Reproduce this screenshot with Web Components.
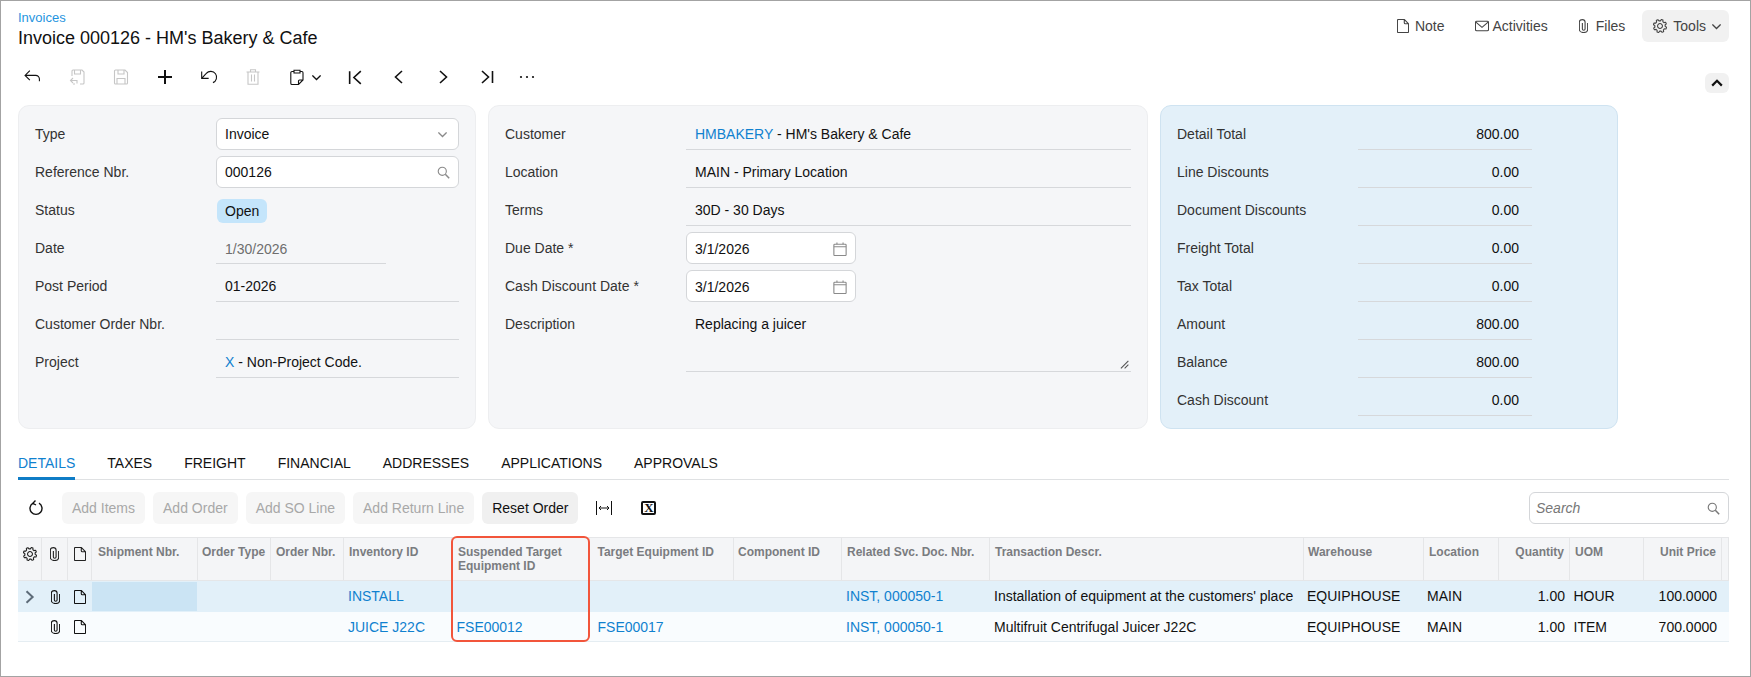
<!DOCTYPE html>
<html>
<head>
<meta charset="utf-8">
<title>Invoice 000126</title>
<style>
  html, body { margin: 0; padding: 0; background: #fff; }
  body { font: 14px "Liberation Sans", Arial, sans-serif; color: #111; }
</style>
</head>
<body>
<inv-page>
  <inv-header slot="header" crumb="Invoices" heading="Invoice 000126 - HM's Bakery &amp; Cafe">
    <inv-action icon="note" size="12" style="--gap:6px">Note</inv-action>
    <inv-action icon="mail" size="14" style="--gap:4px;margin-left:30px">Activities</inv-action>
    <inv-action icon="clip" size="9" style="--gap:8px;margin-left:31px">Files</inv-action>
    <inv-action icon="gear" size="14" menu style="--gap:6px;margin-left:17px">Tools</inv-action>
  </inv-header>

  <inv-toolbar slot="toolbar"></inv-toolbar>

  <inv-panels slot="panels">
    <inv-panel style="width:458px">
      <inv-field label="Type" kind="select">Invoice</inv-field>
      <inv-field label="Reference Nbr." kind="lookup">000126</inv-field>
      <inv-field label="Status" kind="pill">Open</inv-field>
      <inv-field label="Date" kind="muted">1/30/2026</inv-field>
      <inv-field label="Post Period">01-2026</inv-field>
      <inv-field label="Customer Order Nbr."></inv-field>
      <inv-field label="Project"><inv-link>X</inv-link> - Non-Project Code.</inv-field>
    </inv-panel>
    <inv-panel style="width:660px">
      <inv-field label="Customer"><inv-link>HMBAKERY</inv-link> - HM's Bakery &amp; Cafe</inv-field>
      <inv-field label="Location">MAIN - Primary Location</inv-field>
      <inv-field label="Terms">30D - 30 Days</inv-field>
      <inv-field label="Due Date *" kind="date">3/1/2026</inv-field>
      <inv-field label="Cash Discount Date *" kind="date">3/1/2026</inv-field>
      <inv-field label="Description" kind="area">Replacing a juicer</inv-field>
    </inv-panel>
    <inv-panel tone="blue" style="width:458px">
      <inv-field label="Detail Total" kind="amount">800.00</inv-field>
      <inv-field label="Line Discounts" kind="amount">0.00</inv-field>
      <inv-field label="Document Discounts" kind="amount">0.00</inv-field>
      <inv-field label="Freight Total" kind="amount">0.00</inv-field>
      <inv-field label="Tax Total" kind="amount">0.00</inv-field>
      <inv-field label="Amount" kind="amount">800.00</inv-field>
      <inv-field label="Balance" kind="amount">800.00</inv-field>
      <inv-field label="Cash Discount" kind="amount">0.00</inv-field>
    </inv-panel>
  </inv-panels>

  <inv-tabs slot="tabs" active="DETAILS" items="DETAILS,TAXES,FREIGHT,FINANCIAL,ADDRESSES,APPLICATIONS,APPROVALS"></inv-tabs>

  <inv-grid-bar slot="gridbar"></inv-grid-bar>

  <inv-grid slot="grid"></inv-grid>
</inv-page>

<script>
// Gear outline is easier to generate than to write by hand
const GEAR = (() => {
  let d = '';
  for (let i = 0; i < 48; i++) {
    const a = (i / 48) * Math.PI * 2;
    const r = (i % 6 < 3) ? 7.6 : 5.9;
    d += (i ? 'L' : 'M') + (8 + r * Math.cos(a + 0.2)).toFixed(2) + ' ' + (8 + r * Math.sin(a + 0.2)).toFixed(2);
  }
  return d + 'Z M10.8 8a2.8 2.8 0 1 1-5.6 0a2.8 2.8 0 1 1 5.600 0Z';
})();

const ICONS = {
  back: '<path d="M1 6H11a3.500 3.500 0 0 1 3.500 3.500V11.500M5.500 1.500L1 6l4.500 4.500"/>',
  saveclose: '<path d="M3 7V2a1 1 0 0 1 1-1h9l2 2v11a1 1 0 0 1-1 1h-3M5.500 1v4h6V1M1.500 11.500h6.500v3M4 9L1.500 11.500 4 14M4 15h2"/>',
  save: '<path d="M2.500 1h9.500l2.500 2.500V14a1 1 0 0 1-1 1h-11a1 1 0 0 1-1-1V2a1 1 0 0 1 1-1zM5 1v4h6V1M4 15V9.500h8V15"/>',
  plus: '<path stroke-width="2" d="M8 1v14M1 8h14"/>',
  undo: '<path d="M1.500 3v6.200h6.200M1.500 9.200L5.600 4.800A5.200 5.200 0 1 1 11.500 13"/>',
  trash: '<path d="M1.500 3h13M5.500 3V.8h5V3M3 3V15.200h10V3M6.500 5.500v7M9.500 5.500v7"/>',
  paste: '<path d="M5 2.500H3a1.200 1.200 0 0 0-1.200 1.200v10.600A1.200 1.200 0 0 0 3 15.500h6.500l4.500-4.500V3.700a1.200 1.200 0 0 0-1.200-1.200H11M5 4V1.200h6V4zM9.500 15.500V12a1 1 0 0 1 1-1H14"/>',
  first: '<path stroke-width="1.600" d="M2.500 2v12M13 2L6.500 8l6.500 6"/>',
  prev: '<path stroke-width="1.600" d="M11 2L4.500 8l6.500 6"/>',
  next: '<path stroke-width="1.600" d="M5 2l6.500 6L5 14"/>',
  last: '<path stroke-width="1.600" d="M13.500 2v12M3 2l6.500 6L3 14"/>',
  more: '<circle cx="2" cy="8" r="1.100" fill="currentColor" stroke="none"/><circle cx="8" cy="8" r="1.100" fill="currentColor" stroke="none"/><circle cx="14" cy="8" r="1.100" fill="currentColor" stroke="none"/>',
  down: '<path stroke-width="1.300" d="M3 5.500l5 5 5-5"/>',
  up: '<path stroke-width="2.200" d="M2.500 11L8 5.500l5.500 5.500"/>',
  rowopen: '<path stroke-width="2" d="M4 1.500L11 8l-7 6.500"/>',
  search: '<circle cx="6.500" cy="6.500" r="5"/><path stroke-width="1.500" d="M10.200 10.200L15 15"/>',
  note: '<path d="M2.700 .5H9.500L14.500 5.500V14.300a1.200 1.200 0 0 1-1.200 1.200H2.700a1.200 1.200 0 0 1-1.200-1.200V1.700a1.200 1.200 0 0 1 1.200-1.200zM9.500 .5V4.300a1.200 1.200 0 0 0 1.200 1.200h3.800"/>',
  mail: '<rect x=".5" y="2.500" width="15" height="11" rx="1.500"/><path d="M1 3.500L8 9.500l7-6"/>',
  clip: '<path d="M13.500 4.500v7.500a5.500 3.500 0 0 1-11 0V3.500a3.800 2.800 0 0 1 7.600 0V11.500a1.800 1.300 0 0 1-3.600 0V4.500"/>',
  gear: `<path stroke-linejoin="round" d="${GEAR}"/>`,
  calendar: '<rect x="1" y="2.500" width="14" height="13" rx="1"/><path d="M1 5.500h14M4.500 .5v2M11.500 .5v2"/>',
  refresh: '<path stroke-width="1.400" d="M5 3.200a6 6 0 1 0 6 0M7.500 .5L4.800 3.300 8 5"/>',
  fit: '<path stroke-width="1" d="M.5 1v14M15.500 1v14M3 8h10M5 6L3 8l2 2M11 6l2 2-2 2"/>',
  resize: '<path d="M3 15L15 3M9 15l6-6"/>'
};

// Tighter view boxes, so that the size attribute is the drawn size
const VIEWS = {
  down: '2.5 2.5 11 11',
  note: '1 0 14 16',
  clip: '2 0 12 16'
};

/**
 * Inline icon. Takes name, size and an optional height.
 */
class InvIcon extends HTMLElement {
  connectedCallback() {
    const size = this.getAttribute('size') || 16;
    const height = this.getAttribute('height') || size;
    const name = this.getAttribute('name');
    const fit = height !== size ? ' preserveAspectRatio="none"' : '';
    this.attachShadow({ mode: 'open' }).innerHTML = `
      <style>
        :host { display: inline-flex; flex: none; }
        svg { display: block; fill: none; stroke: currentColor; stroke-width: 1.1px; }
        svg * { vector-effect: non-scaling-stroke; }
      </style>
      <svg width="${size}" height="${height}" viewBox="${VIEWS[name] || '0 0 16 16'}"${fit}>${ICONS[name]}</svg>`;
  }
}
customElements.define('inv-icon', InvIcon);

class InvLink extends HTMLElement {
  constructor() {
    super();
    this.attachShadow({ mode: 'open' }).innerHTML = `
      <style>:host { color: #1081cf; }</style><slot></slot>`;
  }
}
customElements.define('inv-link', InvLink);

/**
 * Page frame. Stacks everything in order.
 */
class InvPage extends HTMLElement {
  constructor() {
    super();
    this.attachShadow({ mode: 'open' }).innerHTML = `
      <style>
        :host {
          display: flex;
          flex-direction: column;
          box-sizing: border-box;
          width: 1751px;
          height: 677px;
          padding: 9px 21px 0 17px;
          border: 1px solid #a3a3a3;
          overflow: hidden;
          font: 14px "Liberation Sans", Arial, sans-serif;
          color: #111;
          background: #fff;
        }
      </style>
      <slot name="header"></slot>
      <slot name="toolbar"></slot>
      <slot name="panels"></slot>
      <slot name="tabs"></slot>
      <slot name="gridbar"></slot>
      <slot name="grid"></slot>`;
  }
}
customElements.define('inv-page', InvPage);

class InvHeader extends HTMLElement {
  connectedCallback() {
    this.attachShadow({ mode: 'open' }).innerHTML = `
      <style>
        :host { display: flex; justify-content: space-between; height: 40px; }
        .crumb { font-size: 13px; line-height: 15px; color: #1f95e0; }
        h1 { margin: 1px 0 0; font-size: 18px; font-weight: 400; line-height: 24px; color: #111; }
        .actions { display: flex; align-items: flex-start; }
      </style>
      <div>
        <div class="crumb">${this.getAttribute('crumb')}</div>
        <h1></h1>
      </div>
      <div class="actions"><slot></slot></div>`;
    this.shadowRoot.querySelector('h1').textContent = this.getAttribute('heading');
  }
}
customElements.define('inv-header', InvHeader);

class InvAction extends HTMLElement {
  connectedCallback() {
    const menu = this.hasAttribute('menu');
    const size = this.getAttribute('size');
    this.attachShadow({ mode: 'open' }).innerHTML = `
      <style>
        :host {
          display: inline-flex;
          align-items: center;
          gap: var(--gap, 6px);
          height: 32px;
          color: #444;
          ${menu ? 'background: #f1f1f1; border-radius: 6px; padding: 0 8px 0 11px;' : ''}
        }
      </style>
      <inv-icon name="${this.getAttribute('icon')}" size="${size}" height="14"></inv-icon>
      <slot></slot>
      ${menu ? '<inv-icon name="down" size="9"></inv-icon>' : ''}`;
  }
}
customElements.define('inv-action', InvAction);

/**
 * Main form toolbar.
 */
class InvToolbar extends HTMLElement {
  constructor() {
    super();
    const tool = (name, size, off) => `
      <button class="${off ? 'off' : ''}"><inv-icon name="${name}" size="${size}"></inv-icon></button>`;
    this.attachShadow({ mode: 'open' }).innerHTML = `
      <style>
        :host { display: flex; align-items: flex-end; height: 32px; margin-top: 11px; }
        .tools { display: flex; margin-left: -7.5px; height: 32px; }
        button {
          display: flex; align-items: center; justify-content: center;
          width: 44px; height: 32px; padding: 0; border: 0; background: none; color: #111;
        }
        button.off { color: #c6c6c6; }
        button.paste { width: 58.5px; justify-content: flex-start; padding-left: 14.5px; gap: 7px; }
        button.more { width: 36px; }
        .collapse {
          margin-left: auto; width: 24px; height: 20px; border-radius: 6px;
          background: #f1f1f1;
        }
      </style>
      <div class="tools">
        ${tool('back', 17)}${tool('saveclose', 16, true)}${tool('save', 16, true)}${tool('plus', 16)}
        ${tool('undo', 18)}${tool('trash', 16, true)}
        <button class="paste"><inv-icon name="paste" size="16"></inv-icon><inv-icon name="down" size="9"></inv-icon></button>
        ${tool('first', 17)}${tool('prev', 16)}${tool('next', 16)}${tool('last', 16)}
        <button class="more"><inv-icon name="more" size="16"></inv-icon></button>
      </div>
      <button class="collapse"><inv-icon name="up" size="14"></inv-icon></button>`;
  }
}
customElements.define('inv-toolbar', InvToolbar);

class InvPanels extends HTMLElement {
  constructor() {
    super();
    this.attachShadow({ mode: 'open' }).innerHTML = `
      <style>:host { display: flex; gap: 12px; height: 324px; margin-top: 12px; }</style>
      <slot></slot>`;
  }
}
customElements.define('inv-panels', InvPanels);

class InvPanel extends HTMLElement {
  constructor() {
    super();
    this.attachShadow({ mode: 'open' }).innerHTML = `
      <style>
        :host {
          display: flex; flex-direction: column; gap: 6px;
          box-sizing: border-box;
          padding: 12px 16px;
          border: 1px solid #edeef0;
          border-radius: 11px;
          background: #f5f6f8;
        }
        :host([tone="blue"]) {
          padding-right: 85px;
          border-color: #cfe3f1;
          background: #e3f0f9;
        }
      </style>
      <slot></slot>`;
  }
}
customElements.define('inv-panel', InvPanel);

/**
 * Label plus value. The kind attribute picks how the value is boxed.
 */
class InvField extends HTMLElement {
  connectedCallback() {
    const kind = this.getAttribute('kind') || 'plain';
    const trailing = {
      select: '<inv-icon class="gray" name="down" size="9"></inv-icon>',
      lookup: '<inv-icon class="gray" name="search" size="13"></inv-icon>',
      date: '<inv-icon class="gray" name="calendar" size="14"></inv-icon>',
      area: '<inv-icon class="grip" name="resize" size="10"></inv-icon>'
    }[kind] || '';
    this.attachShadow({ mode: 'open' }).innerHTML = `
      <style>
        :host {
          display: grid;
          grid-template-columns: 181px 1fr;
          align-items: start;
          min-height: 32px;
          color: #111;
        }
        :host([kind="area"]) { min-height: 64px; }
        .label { line-height: 32px; color: #333; white-space: nowrap; }
        .value {
          display: flex; align-items: center; justify-content: space-between;
          box-sizing: border-box;
          height: 32px;
          padding: 0 9px;
          line-height: 32px;
          border-bottom: 1px solid #d6d8db;
          white-space: nowrap;
        }
        .value slot { display: block; }
        .select, .lookup, .date {
          background: #fff;
          border: 1px solid #d4d6d9;
          border-radius: 6px;
          padding: 2px 8px 0;
        }
        .select, .lookup { padding-top: 0; }
        .date { width: 170px; padding-right: 8px; }
        .muted { width: 170px; color: #6e6e6e; padding-top: 2px; }
        .pill { border: 0; padding: 0; margin-top: 5px; height: auto; }
        .pill span {
          display: block; margin-left: 1px; padding: 0 8px; height: 24px; line-height: 25px;
          background: #c4e5fb; border-radius: 6px;
        }
        .area { position: relative; height: 64px; align-items: flex-start; }
        .grip { position: absolute; right: 2px; bottom: 2px; color: #555; }
        .amount { width: 174px; justify-content: flex-end; padding-right: 13px; }
        .gray { color: #8a8a8a; }
        .select .gray { margin-right: 3px; }
      </style>
      <div class="label">${this.getAttribute('label')}</div>
      <div class="value ${kind}">${kind === 'pill' ? '<span><slot></slot></span>' : '<slot></slot>'}${trailing}</div>`;
  }
}
customElements.define('inv-field', InvField);

class InvTabs extends HTMLElement {
  connectedCallback() {
    const active = this.getAttribute('active');
    const tabs = this.getAttribute('items').split(',').map(t =>
      `<div class="tab ${t === active ? 'on' : ''}">${t}</div>`).join('');
    this.attachShadow({ mode: 'open' }).innerHTML = `
      <style>
        :host {
          display: flex; gap: 32px;
          box-sizing: border-box;
          height: 31px;
          margin-top: 20px;
          border-bottom: 1px solid #dfe1e3;
        }
        .tab { box-sizing: border-box; height: 31px; line-height: 28px; color: #111; }
        .on { color: #1081cf; border-bottom: 3px solid #0f7cc6; }
      </style>
      ${tabs}`;
  }
}
customElements.define('inv-tabs', InvTabs);

/**
 * Toolbar over the grid: refresh, actions, fit, export and search.
 */
class InvGridBar extends HTMLElement {
  constructor() {
    super();
    const btn = (label, on) => `<div class="btn ${on ? 'on' : ''}">${label}</div>`;
    this.attachShadow({ mode: 'open' }).innerHTML = `
      <style>
        :host { display: flex; align-items: center; gap: 8px; height: 32px; margin-top: 12px; }
        .refresh { width: 36px; display: flex; justify-content: center; color: #111; }
        .btn {
          box-sizing: border-box; height: 32px; padding: 0 10px; line-height: 32px;
          border-radius: 6px; background: #f6f6f6; color: #a8a8a8; white-space: nowrap;
        }
        .btn.on { background: #f0f0f0; color: #111; }
        .fit { margin-left: 10px; color: #111; }
        .xls {
          box-sizing: border-box;
          margin-left: 21px; width: 15px; height: 14px;
          border: 2px solid #111; border-radius: 2px;
          font: bold 13px/10px "Liberation Serif", serif; text-align: center; color: #111;
        }
        .search {
          display: flex; align-items: center; justify-content: space-between;
          box-sizing: border-box;
          margin-left: auto; width: 200px; height: 32px; padding: 0 8px 0 6px;
          border: 1px solid #d4d6d9; border-radius: 6px; background: #fff;
          font-style: italic; color: #777;
        }
      </style>
      <div class="refresh"><inv-icon name="refresh" size="16"></inv-icon></div>
      ${btn('Add Items')}${btn('Add Order')}${btn('Add SO Line')}${btn('Add Return Line')}${btn('Reset Order', true)}
      <inv-icon class="fit" name="fit" size="16"></inv-icon>
      <div class="xls">X</div>
      <div class="search">Search<inv-icon name="search" size="13"></inv-icon></div>`;
  }
}
customElements.define('inv-grid-bar', InvGridBar);

// hp and cp are the left paddings of the header and of the cells
const COLUMNS = [
  { w: 24 }, { w: 26 }, { w: 24 },
  { w: 106, hp: 6, cp: 5, title: 'Shipment Nbr.', key: 'ship' },
  { w: 73, hp: 4, cp: 5, title: 'Order Type', key: 'type' },
  { w: 73, hp: 5, cp: 5, title: 'Order Nbr.', key: 'order' },
  { w: 108, hp: 5, cp: 4, title: 'Inventory ID', key: 'inv', link: true },
  { w: 138, hp: 6, cp: 4.5, title: 'Suspended Target Equipment ID', key: 'susp', link: true },
  { w: 144, hp: 7.5, cp: 7.5, title: 'Target Equipment ID', key: 'target', link: true },
  { w: 108, hp: 4, cp: 4, title: 'Component ID', key: 'comp' },
  { w: 148, hp: 5, cp: 4, title: 'Related Svc. Doc. Nbr.', key: 'svc', link: true },
  { w: 314, hp: 5, cp: 4, title: 'Transaction Descr.', key: 'descr' },
  { w: 120, hp: 4, cp: 3, title: 'Warehouse', key: 'wh' },
  { w: 75, hp: 5, cp: 3, title: 'Location', key: 'loc' },
  { w: 71, title: 'Quantity', key: 'qty', right: true },
  { w: 74, hp: 5, cp: 3.5, title: 'UOM', key: 'uom' },
  { w: 78, title: 'Unit Price', key: 'price', right: true },
  { w: 7 }
];

const ROWS = [
  { inv: 'INSTALL', svc: 'INST, 000050-1', descr: "Installation of equipment at the customers' place",
    wh: 'EQUIPHOUSE', loc: 'MAIN', qty: '1.00', uom: 'HOUR', price: '100.0000', open: true },
  { inv: 'JUICE J22C', susp: 'FSE00012', target: 'FSE00017', svc: 'INST, 000050-1',
    descr: 'Multifruit Centrifugal Juicer J22C', wh: 'EQUIPHOUSE', loc: 'MAIN', qty: '1.00', uom: 'ITEM', price: '700.0000' }
];

/**
 * Details grid, with the red callout laid over one column.
 */
class InvGrid extends HTMLElement {
  constructor() {
    super();
    const tpl = COLUMNS.map(c => c.w + 'px').join(' ');
    const clip = '<inv-icon name="clip" size="9" height="14"></inv-icon>';
    const note = '<inv-icon name="note" size="12" height="14"></inv-icon>';
    const head = COLUMNS.map((c, i) => {
      if (i === 0) return '<div class="hc ic"><inv-icon name="gear" size="14"></inv-icon></div>';
      if (i === 1) return `<div class="hc ic">${clip}</div>`;
      if (i === 2) return `<div class="hc ic">${note}</div>`;
      const pad = c.right ? '' : ` style="padding-left:${c.hp || 0}px"`;
      return `<div class="hc ${c.right ? 'r' : ''}"${pad}>${c.title || ''}</div>`;
    }).join('');
    const rows = ROWS.map((row, n) => {
      const cells = COLUMNS.map((c, i) => {
        if (i === 0) return `<div class="c ic">${row.open ? '<inv-icon class="open" name="rowopen" size="14"></inv-icon>' : ''}</div>`;
        if (i === 1) return `<div class="c ic">${clip}</div>`;
        if (i === 2) return `<div class="c ic">${note}</div>`;
        const cls = [c.right ? 'r' : '', c.link ? 'link' : '', n === 0 && c.key === 'ship' ? 'sel' : ''].join(' ');
        const pad = c.right ? '' : ` style="padding-left:${c.cp || 0}px"`;
        return `<div class="c ${cls}"${pad}>${(c.key && row[c.key]) || ''}</div>`;
      }).join('');
      return `<div class="row r${n}">${cells}</div>`;
    }).join('');
    this.attachShadow({ mode: 'open' }).innerHTML = `
      <style>
        :host { display: block; position: relative; margin-top: 13px; }
        .head, .row { display: grid; grid-template-columns: ${tpl}; }
        .head {
          box-sizing: border-box; height: 44px;
          background: #f4f5f7;
          border-top: 1px solid #e5e6e8;
          border-bottom: 1px solid #e5e6e8;
        }
        .hc {
          box-sizing: border-box;
          padding: 7px 0 0;
          border-right: 1px solid #e5e6e8;
          font-size: 12px; font-weight: 700; line-height: 14px; color: #7a7c80;
        }
        .hc.r { text-align: right; padding-right: 5px; }
        .hc.ic { padding: 9px 0 0; color: #222; }
        .ic { display: flex; justify-content: center; }
        .row { box-sizing: border-box; align-items: stretch; }
        .r0 { height: 31px; background: #e2f0f9; }
        .r1 { height: 30px; background: #f9fcfe; border-bottom: 1px solid #e5edf2; }
        .c { padding: 0 5px; line-height: 31px; white-space: nowrap; }
        .r1 .c { line-height: 30px; }
        .c.r { text-align: right; }
        .c.ic { padding: 0; align-items: center; color: #111; }
        .c.sel { background: #cbe4f4; margin: 1px 1px 1px 0; line-height: 29px; }
        .link { color: #1081cf; }
        .open { color: #5d6b78; }
        .callout {
          position: absolute; left: 433px; top: -1.5px;
          box-sizing: border-box; width: 138.5px; height: 106px;
          border: 2px solid #f2553b; border-radius: 6px;
          pointer-events: none;
        }
      </style>
      <div class="head">${head}</div>
      ${rows}
      <div class="callout"></div>`;
  }
}
customElements.define('inv-grid', InvGrid);
</script>
</body>
</html>
